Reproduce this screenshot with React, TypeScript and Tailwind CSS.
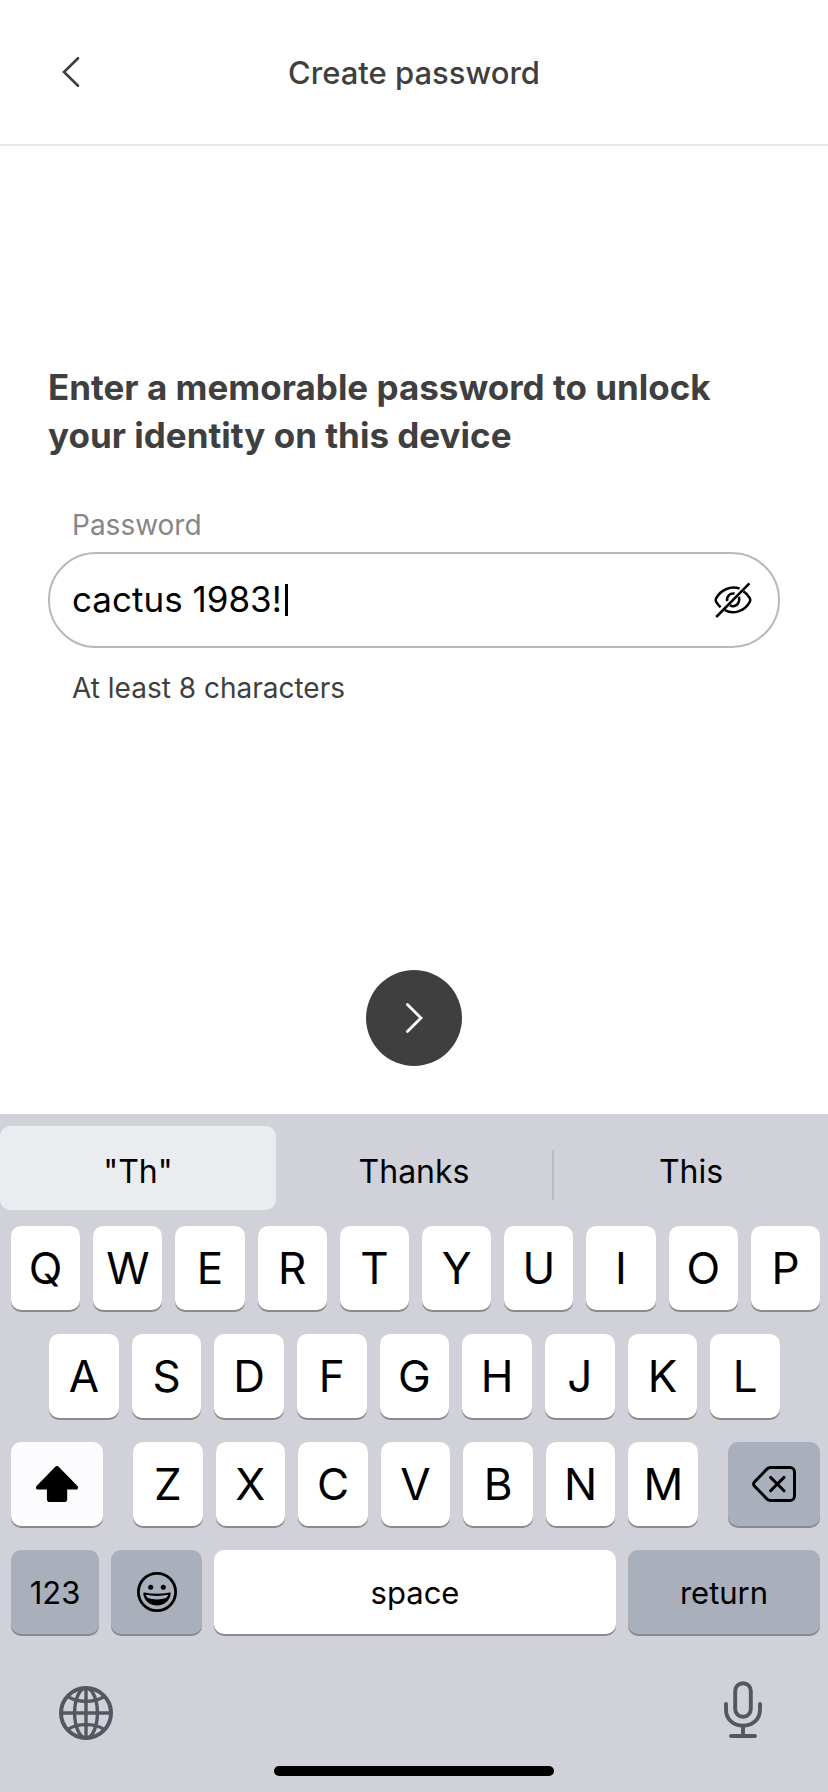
import { useState } from 'react';
import type { ReactNode } from 'react';

const TOP_ROW = ['Q', 'W', 'E', 'R', 'T', 'Y', 'U', 'I', 'O', 'P'];
const HOME_ROW = ['A', 'S', 'D', 'F', 'G', 'H', 'J', 'K', 'L'];
const BOTTOM_ROW = ['Z', 'X', 'C', 'V', 'B', 'N', 'M'];

function ChevronLeft() {
  return (
    <svg width="18" height="32" viewBox="0 0 18 32" fill="none" stroke="currentColor" strokeWidth="2.6" strokeLinecap="round" aria-hidden="true">
      <path d="M16 2.2 2 16l14 13.8" />
    </svg>
  );
}

function ChevronRight() {
  return (
    <svg width="18" height="32" viewBox="0 0 18 32" fill="none" stroke="currentColor" strokeWidth="2.8" strokeLinecap="round" aria-hidden="true">
      <path d="M2.4 2.4 16 16 2.4 29.6" />
    </svg>
  );
}

function EyeOff() {
  return (
    <svg width="40" height="40" viewBox="0 0 40 40" fill="none" stroke="currentColor" strokeWidth="2.5" aria-hidden="true">
      <path d="M3.2 37 36.4 3.4" />
      <path d="M26.6 8.6C18 5.6 8 9.4 3.2 18.2c-.8 1.4-.8 2.2 0 3.6 1.2 2.2 2.6 3.8 4.4 5.4" />
      <path d="M11.8 30.2c8.4 4.6 19.6 1.4 25-8.4.8-1.4.8-2.2 0-3.6-1.6-3-3.8-5.2-6.4-6.8" />
      <path d="M21.6 13.6c-4.6-.8-8 2.6-7.6 7.6" />
      <path d="M26 16.8c1.4 4.8-1.6 9.4-6 9.4-1.2 0-2.2-.4-3-1" />
    </svg>
  );
}

function Shift() {
  return (
    <svg width="42" height="36" viewBox="0 0 42 36" fill="currentColor" aria-hidden="true">
      <path d="M19.3.8a2.4 2.4 0 0 1 3.4 0l18.5 19c1.6 1.7.7 3.8-1.4 3.8h-8.6v9.6a2.9 2.9 0 0 1-2.9 2.8H13.8a2.9 2.9 0 0 1-2.9-2.8v-9.6H2.2c-2.1 0-3-2.1-1.4-3.8z" />
    </svg>
  );
}

function Backspace() {
  return (
    <svg width="44" height="36" viewBox="0 0 44 36" fill="none" stroke="currentColor" strokeWidth="3" strokeLinecap="round" strokeLinejoin="round" aria-hidden="true">
      <path d="M18.5 1.5H38a4.5 4.5 0 0 1 4.5 4.5v24a4.5 4.5 0 0 1-4.5 4.5H18.5a5 5 0 0 1-3.4-1.4L2.4 20a2.8 2.8 0 0 1 0-4L15.1 2.9a5 5 0 0 1 3.4-1.4z" />
      <path d="m18.6 11.400 13.400 13.400M32 11.400 18.600 24.800" />
    </svg>
  );
}

function Smile() {
  return (
    <svg width="40" height="40" viewBox="0 0 40 40" fill="none" aria-hidden="true">
      <circle cx="20" cy="20" r="18.6" stroke="currentColor" strokeWidth="2.8" />
      <circle cx="13.7" cy="15.2" r="2.5" fill="currentColor" />
      <circle cx="26.3" cy="15.2" r="2.5" fill="currentColor" />
      <path d="M7.4 20.6c8 1.600 17.200 1.600 25.200 0 .7-.1 1.100.3 1.100 1-.5 6.800-6.100 12-13.700 12s-13.200-5.200-13.700-12c0-.7.4-1.100 1.100-1z" fill="currentColor" />
      <path d="M8.800 22.800c7 1.500 15.400 1.500 22.400 0-.4 1.300-1 2.200-1.800 3-5.600 2.200-13.200 2.200-18.800 0-.8-.8-1.400-1.700-1.800-3z" className="fill-[#a9afbb]" />
    </svg>
  );
}

function Globe() {
  return (
    <svg width="54" height="54" viewBox="0 0 54 54" fill="none" stroke="currentColor" strokeWidth="3.4" aria-hidden="true">
      <circle cx="27" cy="27" r="25" strokeWidth="4" />
      <ellipse cx="27" cy="27" rx="11.4" ry="25" />
      <path d="M27 2v50M2 27h50" />
      <path d="M8.6 10.4c9.800 6.600 27 6.600 36.800 0M8.600 43.600c9.800-6.600 27-6.600 36.800 0" />
    </svg>
  );
}

function Microphone() {
  return (
    <svg width="38" height="58" viewBox="0 0 38 58" fill="none" stroke="currentColor" strokeWidth="3.9" strokeLinecap="round" aria-hidden="true">
      <rect x="11.2" y="2.2" width="15.6" height="33.6" rx="7.8" />
      <path d="M2 23v5.4C2 38 9 44.600 19 44.600S36 38 36 28.400V23" />
      <path d="M19 45v10M7 55h24" />
    </svg>
  );
}

type KeyProps = { className: string; label?: string; children: ReactNode };

function Key({ className, label, children }: KeyProps) {
  return (
    <button
      type="button"
      aria-label={label}
      className={`flex h-[84px] items-center justify-center rounded-[10px] shadow-[0_2px_0_#898a8d] ${className}`}
    >
      {children}
    </button>
  );
}

function LetterKeys({ letters }: { letters: string[] }) {
  return (
    <>
      {letters.map((letter) => (
        <Key key={letter} className="min-w-0 flex-1 bg-white text-[44px]">
          {letter}
        </Key>
      ))}
    </>
  );
}

function Keyboard() {
  return (
    <section aria-label="Keyboard" className="bg-[#d1d1da] pt-3 pb-4 text-black">
      <div className="grid h-[84px] grid-cols-3 text-[32px]">
        <button type="button" className="rounded-[10px] bg-[#ebecf0] pt-2">"Th"</button>
        <button type="button" className="pt-2">Thanks</button>
        <div className="flex items-center">
          <span className="mt-[14px] h-[50px] w-[2px] bg-[#bbbcc1]" />
          <button type="button" className="h-full flex-1 pt-2">This</button>
        </div>
      </div>

      <div className="mt-4 flex flex-col gap-6 pr-2 pl-[11px]">
        <div className="flex gap-[13px]">
          <LetterKeys letters={TOP_ROW} />
        </div>
        <div className="flex gap-[13px] pr-10 pl-[38px]">
          <LetterKeys letters={HOME_ROW} />
        </div>
        <div className="flex gap-[30px]">
          <Key label="Shift" className="w-[92px] bg-[#fcfcfe]">
            <Shift />
          </Key>
          <div className="flex min-w-0 flex-1 gap-[13px]">
            <LetterKeys letters={BOTTOM_ROW} />
          </div>
          <Key label="Delete" className="w-[92px] bg-[#a9afbb]">
            <Backspace />
          </Key>
        </div>
        <div className="flex gap-3 text-[31px]">
          <Key className="w-[88px] bg-[#a9afbb] pt-[2px]">123</Key>
          <Key label="Emoji" className="w-[91px] bg-[#a9afbb]">
            <Smile />
          </Key>
          <Key className="min-w-0 flex-1 bg-white pt-[2px]">space</Key>
          <Key className="w-[192px] bg-[#a9afbb] pt-[2px]">return</Key>
        </div>
      </div>

      <div className="mt-11 flex h-[64px] items-center justify-between pr-[66px] pl-[59px] text-[#515860]">
        <button type="button" aria-label="Next keyboard" className="mt-[6px]">
          <Globe />
        </button>
        <button type="button" aria-label="Dictate">
          <Microphone />
        </button>
      </div>
      <div className="mx-auto mt-6 h-[10px] w-[280px] rounded-full bg-black" />
    </section>
  );
}

export default function App() {
  const [password, setPassword] = useState('cactus 1983!');
  const [visible, setVisible] = useState(true);

  return (
    <div className="flex min-h-screen flex-col bg-white font-['Inter','Liberation_Sans',sans-serif] text-[#3f3f3f]">
      <header className="grid h-[146px] grid-cols-[80px_1fr_80px] items-center border-b-2 border-[#e8e8e8]">
        <button type="button" aria-label="Back" className="flex justify-end">
          <ChevronLeft />
        </button>
        <h1 className="pt-[2px] text-center text-[31px] font-medium">Create password</h1>
      </header>

      <main className="flex flex-1 flex-col px-12 pt-[217px] pb-12">
        <h2 className="text-[35px] leading-[48px] font-bold">
          Enter a memorable password to unlock your identity on this device
        </h2>
        <label htmlFor="password" className="mt-[46px] pl-6 text-[28px] leading-10 text-[#868686]">
          Password
        </label>
        <div className="mt-[7px] flex h-24 items-center rounded-full border-2 border-[#b8b8b8] pr-[25px] pl-[22px] text-black">
          <input
            id="password"
            type={visible ? 'text' : 'password'}
            value={password}
            onChange={(event) => setPassword(event.target.value)}
            aria-describedby="password-hint"
            className="field-sizing-content max-w-full bg-transparent pb-[2px] text-[35px] caret-transparent outline-none"
          />
          <span className="ml-[3px] h-8 w-[3px] bg-black" />
          <button
            type="button"
            aria-label={visible ? 'Hide password' : 'Show password'}
            onClick={() => setVisible(!visible)}
            className="ml-auto"
          >
            <EyeOff />
          </button>
        </div>
        <p id="password-hint" className="mt-5 pl-6 text-[28px] leading-10">
          At least 8 characters
        </p>
        <button
          type="button"
          aria-label="Continue"
          className="mx-auto mt-auto flex size-24 items-center justify-center rounded-full bg-[#3f3f3f] text-white"
        >
          <ChevronRight />
        </button>
      </main>

      <Keyboard />
    </div>
  );
}
